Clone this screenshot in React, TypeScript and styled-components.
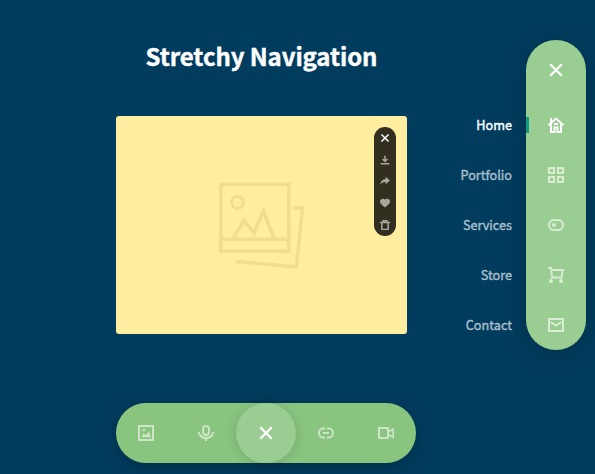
import React from "react";
import styled, { createGlobalStyle } from "styled-components";

const GlobalStyle = createGlobalStyle`
  * { box-sizing: border-box; }
  body {
    margin: 0;
    background: #003c5e;
    color: #fff;
    font-family: "Noto Sans CJK SC", sans-serif;
    overflow: hidden;
  }
`;

const Page = styled.div`
  display: flex;
  height: 474px;
  padding-left: 116px;
`;

const Main = styled.main`
  width: 300px;
  flex: none;
`;

const Title = styled.h1`
  width: 291px;
  margin: 0;
  padding-top: 37px;
  height: 116px;
  font-size: 24px;
  letter-spacing: -0.1px;
  line-height: 38px;
  font-weight: 700;
  -webkit-text-stroke: 0.4px currentColor;
  text-align: center;
  white-space: nowrap;
`;

const Card = styled.section`
  position: relative;
  width: 291px;
  height: 218px;
  background: #ffeea0;
  border-radius: 3px;
  padding: 66px 0 0 102px;
`;

const CardActions = styled.nav`
  position: absolute;
  top: 11px;
  right: 11px;
  width: 22px;
  height: 109px;
  border-radius: 11px;
  background: #332f20;
  display: flex;
  flex-direction: column;
`;

const SmallAction = styled.a<{ $active?: boolean }>`
  height: 21.8px;
  display: grid;
  place-items: center;
  color: ${(p) => (p.$active ? "#fff" : "#a9a79f")};
`;

const AddContent = styled.nav`
  display: flex;
  width: 300px;
  height: 60px;
  margin-top: 69px;
  border-radius: 30px;
  background: #89c57f;
  box-shadow: 0 4px 18px rgba(0, 0, 0, 0.22);
`;

const AddItem = styled.a`
  width: 60px;
  height: 60px;
  display: grid;
  place-items: center;
  color: #cbe5c6;
`;

const CloseItem = styled(AddItem)`
  border-radius: 50%;
  background: #9acd91;
  color: #fff;
  box-shadow: 0 2px 12px rgba(0, 0, 0, 0.15);
`;

const SideNav = styled.nav`
  display: grid;
  grid-template-columns: 96px 14px 60px;
  flex: none;
  margin-top: 40px;
  height: 310px;
`;

const Labels = styled.div`
  padding-top: 60px;
  display: flex;
  flex-direction: column;
  text-align: right;
`;

const Label = styled.a<{ $active?: boolean }>`
  height: 50px;
  line-height: 50px;
  font-size: 12.7px;
  font-weight: 400;
  -webkit-text-stroke: 0.4px currentColor;
  color: ${(p) => (p.$active ? "#fff" : "#a9bfcb")};
`;

const Rail = styled.div`
  grid-column: 3;
  display: flex;
  flex-direction: column;
  border-radius: 30px;
  background: #9acd91;
  box-shadow: 0 4px 24px rgba(0, 0, 0, 0.2);
`;

const RailClose = styled.a`
  height: 60px;
  display: grid;
  place-items: center;
`;

const RailItem = styled.a<{ $active?: boolean }>`
  height: 50px;
  display: grid;
  grid-template-columns: 3px 54px 3px;
  align-items: center;
  justify-items: center;
  color: ${(p) => (p.$active ? "#fff" : "#d9edd5")};
`;

const Marker = styled.i<{ $on?: boolean }>`
  width: 3px;
  height: 16px;
  background: ${(p) => (p.$on ? "#0d9d80" : "transparent")};
`;

const Svg = styled.svg<{ $weight: number }>`
  display: block;
  fill: none;
  stroke: currentColor;
  stroke-width: ${(p) => p.$weight};
`;

type IconName =
  | "close" | "home" | "grid" | "toggle" | "cart" | "mail"
  | "image" | "mic" | "link" | "video"
  | "download" | "share" | "heart" | "trash";

const shapes: Record<IconName, React.ReactNode> = {
  close: <path d="M2.3 2.3 13.7 13.7M13.7 2.3 2.3 13.7" />,
  home: (
    <>
      <path d="M.5 8.200 8 1.500 15.500 8.200" />
      <path d="M3 6.500V15H6.500V10.500H9.500V15H13V6.500" />
      <path d="M3 1v5M6 7h4" />
    </>
  ),
  grid: <path d="M1 1h5v5H1zM10 1h5v5h-5zM1 10h5v5H1zM10 10h5v5h-5z" />,
  toggle: (
    <>
      <rect x="1" y="3" width="14" height="10" rx="5" />
      <circle cx="6" cy="8" r="2" fill="currentColor" stroke="none" />
    </>
  ),
  cart: (
    <>
      <path d="M0 1H3L4 10.500H13.500L14.900 3H3.400" />
      <g fill="currentColor" stroke="none">
        <circle cx="3" cy="14.100" r="2" />
        <circle cx="13" cy="14.100" r="2" />
      </g>
    </>
  ),
  mail: (
    <>
      <path d="M1 2h14v12H1z" />
      <path d="M2.500 5 8 8.500 13.500 5" />
    </>
  ),
  image: (
    <>
      <path d="M1 1h14v14H1z" />
      <g fill="currentColor" stroke="none">
        <path d="M3.500 12.300 5.500 8l2.500 2.200L11 6l2 6.300z" />
        <circle cx="6" cy="5" r="1.300" />
      </g>
    </>
  ),
  mic: (
    <>
      <rect x="5" y="1" width="6" height="9" rx="3" />
      <path d="M1 7v.5C1 10.500 4 13 8 13s7-2.500 7-5.500V7M8 13v3" />
    </>
  ),
  link: (
    <path d="M7 3.500H4.800a3.800 4.500 0 0 0 0 9H7M9 3.500h2.200a3.800 4.500 0 0 1 0 9H9M5 8h6" />
  ),
  video: (
    <>
      <path d="M1 3h9v10H1z" />
      <path d="M10 6.800 15.200 4.300v7.700L10 9.500" strokeWidth="1.800" />
    </>
  ),
  download: <path d="M8 1v9M4 6.500 8 10.500 12 6.500M1 14h14" />,
  share: (
    <path d="M9 1 16 7 9 13V9.500C5 9.300 2.500 10.500 0 14 1 8.500 4 5 9 4.800Z" fill="currentColor" stroke="none" />
  ),
  heart: (
    <path d="M8 15C5 12.500 0 9.300 0 5.500 0 .8 6.300.2 8 3 9.700.2 16 .8 16 5.500 16 9.300 11 12.500 8 15Z" fill="currentColor" stroke="none" />
  ),
  trash: <path d="M0 4h16M5 4V1h6v3M3 5v10h10V5" />,
};

function Icon({ name, size = 16, weight = 2 }: { name: IconName; size?: number; weight?: number }) {
  return (
    <Svg width={size} height={size} viewBox="0 0 16 16" $weight={weight}>
      {shapes[name]}
    </Svg>
  );
}

function Placeholder() {
  return (
    <Svg width="90" height="92" viewBox="0 0 90 92" color="#efdf8d" $weight={3.5}>
      <path d="M2.800 2.300h68v67h-68zM3 57.200h68" />
      <circle cx="19.500" cy="20.500" r="6" strokeWidth="3" />
      <path d="M15.500 56 26 38.500 36 51 45.300 29 56 56" />
      <path d="M75 26H84.500L78.500 85 18.500 79.500" />
    </Svg>
  );
}

const sections: { label: string; icon: IconName }[] = [
  { label: "Home", icon: "home" },
  { label: "Portfolio", icon: "grid" },
  { label: "Services", icon: "toggle" },
  { label: "Store", icon: "cart" },
  { label: "Contact", icon: "mail" },
];

const cardActions: IconName[] = ["close", "download", "share", "heart", "trash"];

export default function App() {
  return (
    <>
      <GlobalStyle />
      <Page>
        <Main>
          <Title>Stretchy Navigation</Title>
          <Card>
            <Placeholder />
            <CardActions>
              {cardActions.map((name) => (
                <SmallAction key={name} $active={name === "close"}>
                  <Icon name={name} size={10} weight={2.4} />
                </SmallAction>
              ))}
            </CardActions>
          </Card>
          <AddContent>
            <AddItem><Icon name="image" /></AddItem>
            <AddItem><Icon name="mic" /></AddItem>
            <CloseItem><Icon name="close" weight={2.3} /></CloseItem>
            <AddItem><Icon name="link" /></AddItem>
            <AddItem><Icon name="video" /></AddItem>
          </AddContent>
        </Main>
        <SideNav>
          <Labels>
            {sections.map((s, i) => (
              <Label key={s.label} $active={i === 0}>{s.label}</Label>
            ))}
          </Labels>
          <Rail>
            <RailClose><Icon name="close" weight={2.3} /></RailClose>
            {sections.map((s, i) => (
              <RailItem key={s.label} $active={i === 0}>
                <Marker $on={i === 0} />
                <Icon name={s.icon} />
              </RailItem>
            ))}
          </Rail>
        </SideNav>
      </Page>
    </>
  );
}
